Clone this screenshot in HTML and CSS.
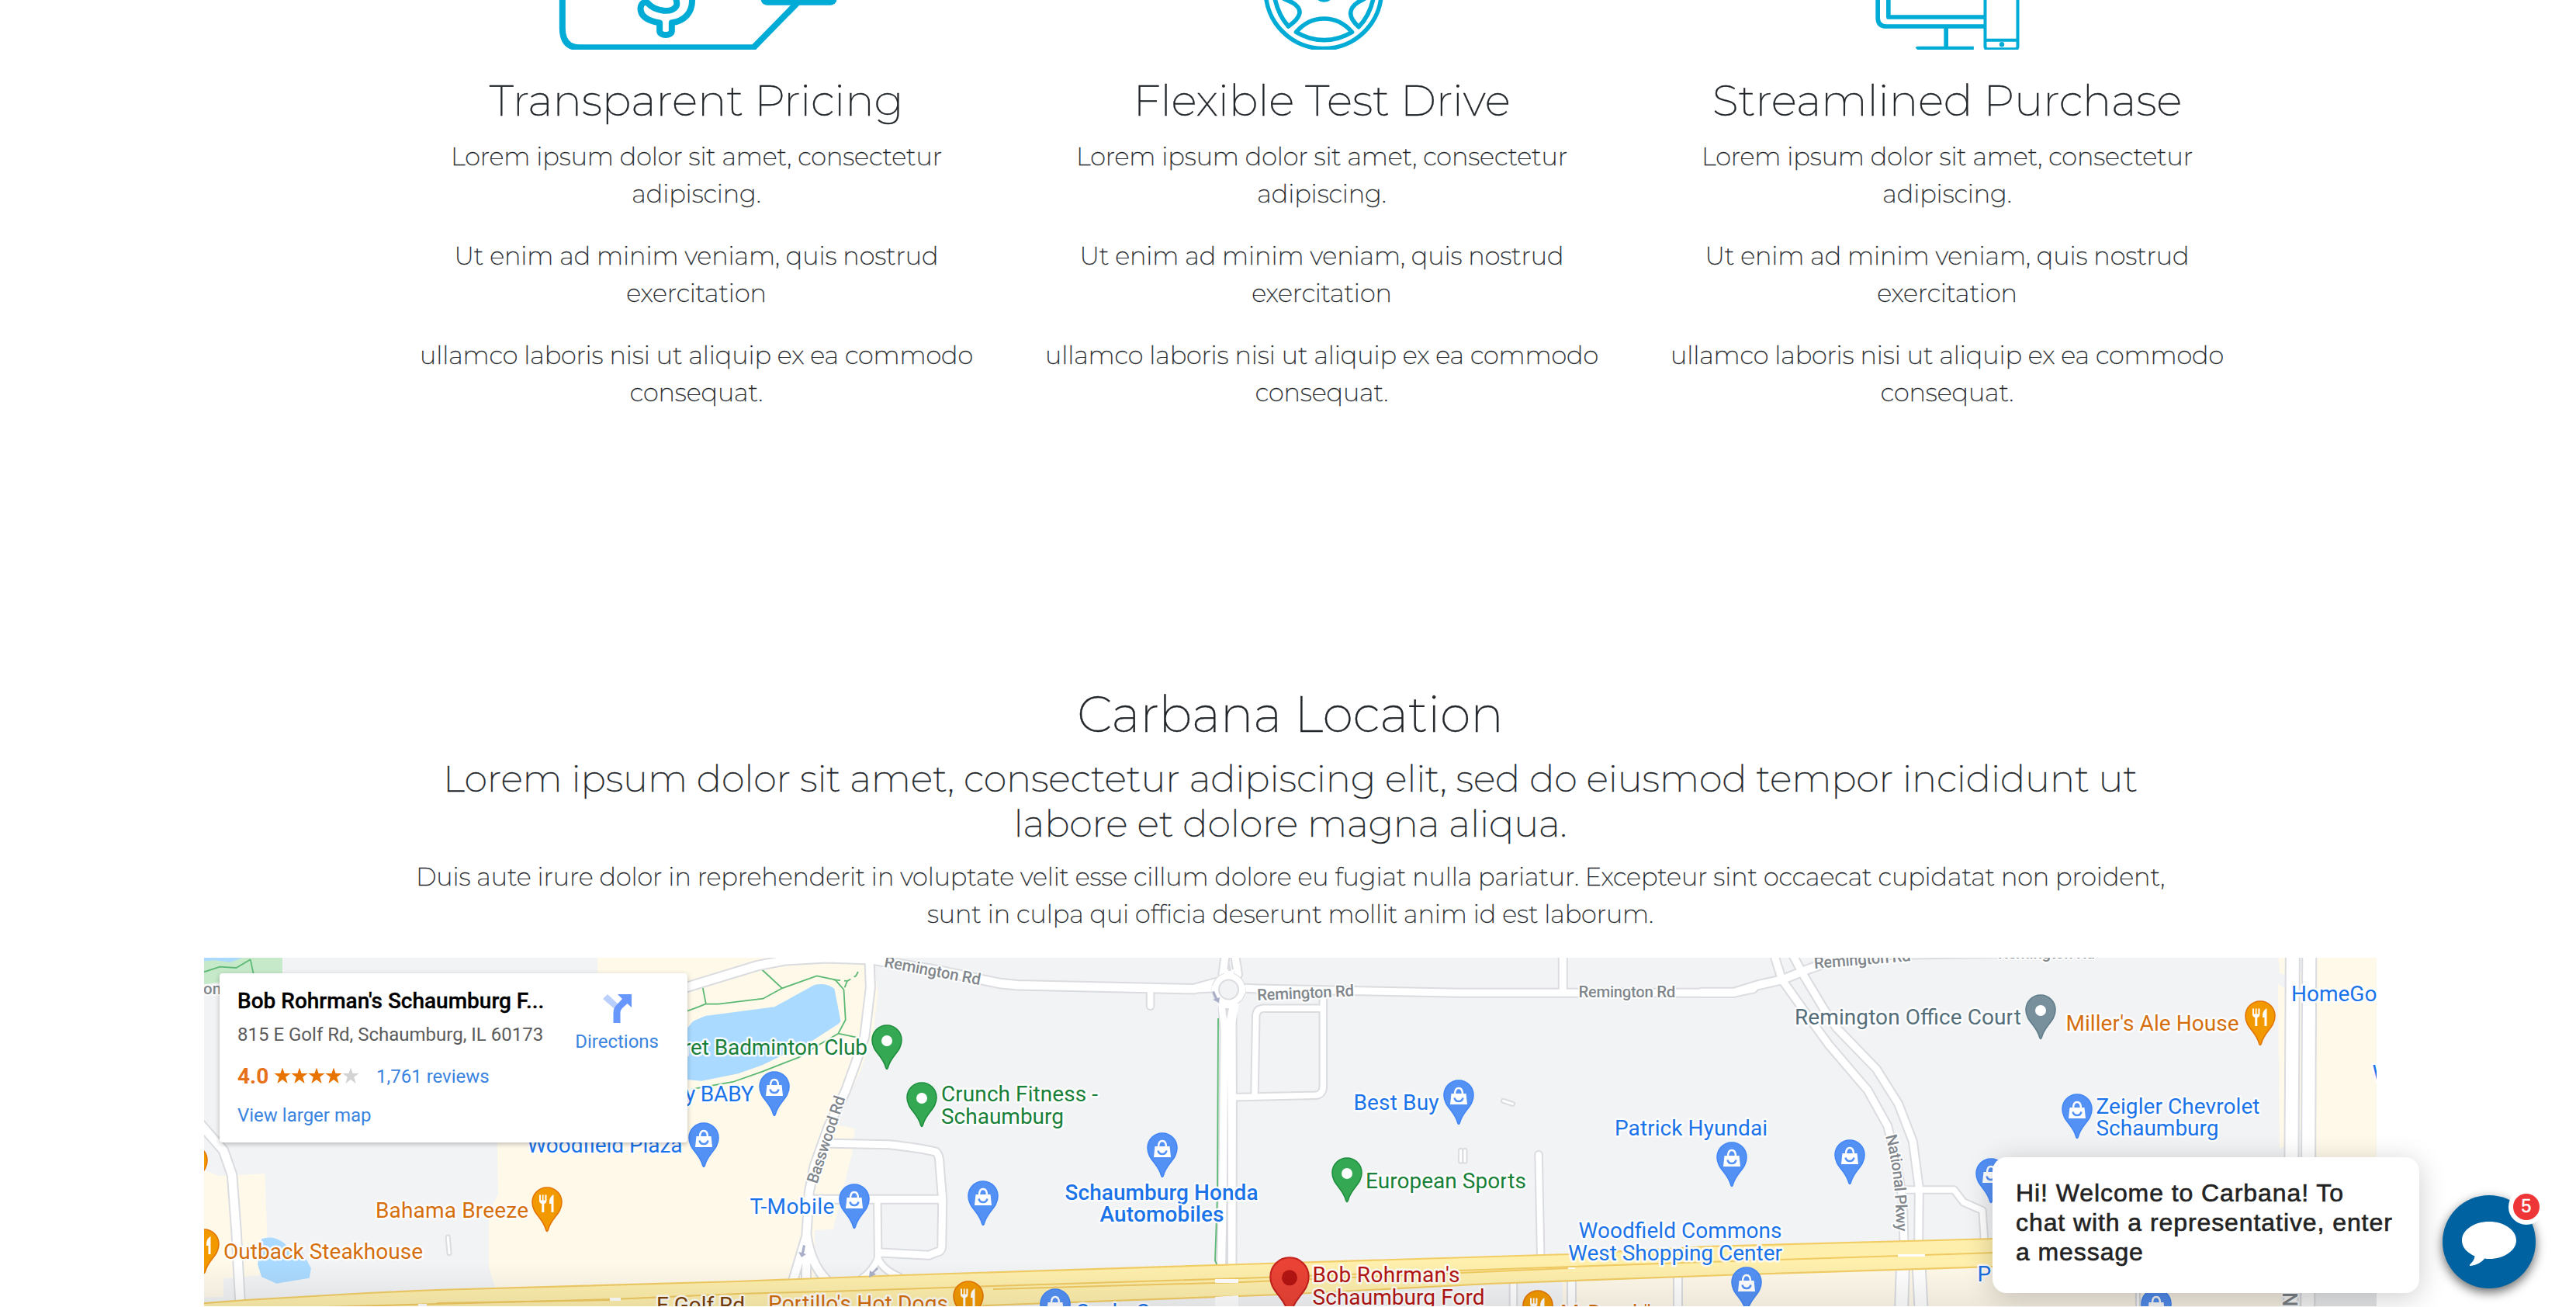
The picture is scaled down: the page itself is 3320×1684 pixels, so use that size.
FILE: index.html
```html
<!DOCTYPE html>
<html lang="en">
<head>
<meta charset="utf-8">
<title>Carbana</title>
<link rel="stylesheet" href="styles.css">
</head>
<body>
<main class="page">
  <section class="features">
    <article class="feature">
      <svg class="feature-icon" viewBox="494.5 0 806 64">
        <g class="line w8" transform="translate(700 0) scale(.3333)">
          <path d="M73-10V110Q74 184 140 184H812L988 4"/>
          <path d="M574-10C580 52 540 82 496 88V120A23 15 0 0 1 449 120V88C400 80 375 60 375 32C378 8 395 4 405 14C430 42 500 56 515 20Q517 8 510-10"/>
        </g>
        <rect class="solid" x="980" y="-20" width="98" height="26.7" rx="8"/>
      </svg>
      <h3>Transparent Pricing</h3>
      <p>Lorem ipsum dolor sit amet, consectetur<br>adipiscing.</p>
      <p>Ut enim ad minim veniam, quis nostrud<br>exercitation</p>
      <p>ullamco laboris nisi ut aliquip ex ea commodo<br>consequat.</p>
    </article>
    <article class="feature">
      <svg class="feature-icon" viewBox="1300.5 0 806 64">
        <g class="line w5" transform="translate(1610 0) scale(.3333)">
          <circle cx="286" cy="-36" r="224"/>
          <path d="M180 124Q225 72 288 72T396 124Q345 155 288 155T180 124ZM98-4Q112 60 150 102Q228 48 166 10L130-6M478-4Q464 60 422 104Q360 48 420 8L446-6"/>
          <circle cx="288" cy="-32" r="32"/>
        </g>
      </svg>
      <h3>Flexible Test Drive</h3>
      <p>Lorem ipsum dolor sit amet, consectetur<br>adipiscing.</p>
      <p>Ut enim ad minim veniam, quis nostrud<br>exercitation</p>
      <p>ullamco laboris nisi ut aliquip ex ea commodo<br>consequat.</p>
    </article>
    <article class="feature">
      <svg class="feature-icon" viewBox="2106.5 0 806 64">
        <g class="line w5" transform="translate(2400 0) scale(.3333)">
          <path d="M59-10V70Q60 102 92 102H470M100-10V66H470M323 108V186M210 190Q212 188 220 188H430"/>
          <path class="w4" d="M474-10V180Q474 190 484 190H590Q600 190 600 180V-10M474 155H600"/>
        </g>
        <circle class="solid" cx="2579.5" cy="57.3" r="3.2"/>
      </svg>
      <h3>Streamlined Purchase</h3>
      <p>Lorem ipsum dolor sit amet, consectetur<br>adipiscing.</p>
      <p>Ut enim ad minim veniam, quis nostrud<br>exercitation</p>
      <p>ullamco laboris nisi ut aliquip ex ea commodo<br>consequat.</p>
    </article>
  </section>

  <section class="location">
    <h1>Carbana Location</h1>
    <h2>Lorem ipsum dolor sit amet, consectetur adipiscing elit, sed do eiusmod tempor incididunt ut<br>labore et dolore magna aliqua.</h2>
    <p>Duis aute irure dolor in reprehenderit in voluptate velit esse cillum dolore eu fugiat nulla pariatur. Excepteur sint occaecat cupidatat non proident,<br>sunt in culpa qui officia deserunt mollit anim id est laborum.</p>
  </section>

  <section class="map">
    <svg class="map-canvas" viewBox="263 1235 2800 449">
      <defs>
        <g id="roads-west" transform="translate(250 1220) scale(.44643 .33333)">
          <path class="r11" d="M20 690L85 790L110 885L122 1100L134 1392"/>
          <path class="r4" d="M733 1125L737 1187"/>
          <path class="r6" d="M662 1385V1400M1222 1362V1392"/>
        </g>
        <g id="roads-mid" transform="translate(900 1220) scale(.44643 .33333)">
          <path class="r11" d="M-60 170L0 145L172 75L250 55L370 46L500 52L700 96L870 144L920 151L1430 166L1500 140"/>
          <path class="r8" d="M1305 170V232"/>
          <path class="r10" d="M494 55L497 160L480 350L455 450L425 560L375 700L335 850L320 950L312 1120L272 1300M313 1120L310 1400M313 1120Q325 1230 370 1290"/>
          <path class="r9" d="M360 762L550 767Q640 780 685 795Q697 805 697 850L705 980L703 1150Q704 1180 690 1182L665 1195L525 1185M330 979H705"/>
          <path class="r8" d="M517 985L519 1205Q505 1255 472 1285M519 1205Q530 1250 580 1278"/>
        </g>
        <g id="roads-centre" transform="translate(1550 1220) scale(.44643 .33333)">
          <path class="r9" d="M65 40L58 110L75 170M94 40L102 110L75 170M-30 165L75 160L160 165L260 168L480 174L740 181H1530L1590 165"/>
          <path class="r10" d="M75 200L60 240L64 330L60 800L54 1235M75 200L84 260L85 600L84 1235"/>
          <path class="r9" d="M1040 30V170"/>
          <path class="r8" d="M348 190V540Q348 575 325 577L90 584M348 241H175Q155 243 154 270L150 580"/>
          <path class="r8" d="M970 806L976 1200"/>
          <path class="r4" d="M868 598L895 610M745 790V832M757 790V832"/>
          <path class="r8" d="M897 1300V1400"/>
          <path class="r9" d="M1065 1285V1400M1372 1270V1400"/>
        </g>
        <g id="roads-east" transform="translate(2200 1220) scale(.33333)">
          <path class="r10" d="M-20 179H106L200 150L290 130L400 86L520 45L700 33L1130 26L1600 20"/>
          <path class="r9" d="M260 35L290 130L390 270L470 380L622 558L698 695L730 820L757 980L762 1150"/>
          <path class="r9" d="M332 35L372 110L450 240L500 315L655 475L740 610L796 755L820 935L818 1150"/>
          <path class="r8" d="M770 942H955L992 990L1065 1022L1073 1140"/>
          <path class="r14" d="M757 1245L752 1400M820 1245L828 1400"/>
        </g>
        <g id="roads-far" transform="translate(2540 1220) scale(.49743 .33333)">
          <path class="r15" d="M834 40L829 1400M877 40L873 1400"/>
          <path class="r4" d="M433 1330V1400"/>
        </g>
        <g id="all-roads">
          <use href="#roads-west"/><use href="#roads-mid"/><use href="#roads-centre"/><use href="#roads-east"/><use href="#roads-far"/>
        </g>
        <path id="pin" d="M20 1C9.500 1 1 9.300 1 20C1 35 15 40 18.800 56Q20 59 21.200 56C25 40 39 35 39 20C39 9.300 30.500 1 20 1Z"/>
        <g id="shop">
          <use href="#pin"/>
          <path class="ink" d="M10.500 18H29.500L31 32H9Z"/>
          <path class="ink-line" d="M15 19Q15 11 20 11T25 19"/>
          <path class="smile" d="M14.500 23.500Q15.500 28 20 28T25.500 23.500"/>
        </g>
        <g id="food">
          <use href="#pin"/>
          <path class="ink" d="M10 10.500H12V17.500H13.800V10.500H15.600V17.500H17.400V10.500H19.500V18Q19.500 21 16.300 22V33H13.300V22Q10 21 10 18ZM28.500 10Q22.500 13 23 22H25.500V33H28.500Z"/>
        </g>
        <g id="place"><use href="#pin"/><circle class="ink" cx="20" cy="21" r="7"/></g>
        <path id="pkwy" d="M2430 1465Q2444 1515 2444 1590"/>
      </defs>

      <rect class="land" x="263" y="1235" width="2800" height="449"/>

      <!-- commercial areas, parks and water -->
      <g transform="translate(250 1220) scale(.44643 .33333)">
        <path class="park" d="M29 45H255V110L75 140L29 148Z"/>
        <path class="water" d="M29 40H150L105 62L60 55L29 58Z"/>
        <path class="trail" d="M29 100L75 80L122 84L163 52M163 52L172 110"/>
        <path class="area" d="M29 868L50 875L70 888L205 880L215 1270L85 1285V1355L29 1358Z"/>
        <path class="water" d="M195 1132Q230 1115 262 1150L278 1182L312 1180L338 1245L333 1283L238 1304L195 1278L184 1230Z"/>
        <path class="area" d="M1165 45H1955L1975 180L1960 350L1925 480L1850 690L1908 705L1900 800L1845 1095L1792 1098V1300L872 1330L851 1240V1070L862 1000L878 960L875 740H1165Z"/>
      </g>
      <g transform="translate(900 1220) scale(.44643 .33333)">
        <path class="water" d="M-40 330L-15 290L20 270L220 235L335 150Q370 140 393 165L411 290L405 300L330 365L185 460L115 493L10 521L-40 515Z"/>
        <path class="trail" d="M-40 255L0 235L22 223L58 224L187 203L242 163L342 115L395 130L420 168L425 285L404 338L455 352M404 338L350 380L290 430L185 485L100 525L-20 553M12 155L22 223M183 90L242 163"/>
        <path class="trail dash" d="M390 130L430 135L455 115L463 95M430 135L420 168"/>
      </g>
      <g transform="translate(2540 1220) scale(.49743 .33333)">
        <path class="area" d="M893 45H1051V1340H893ZM797 45H816V112L800 105ZM796 145L815 165V770L800 785ZM853 100H857V710H852Z"/>
      </g>
      <path class="area" d="M2014 1650L2755 1625H2940V1684H2014Z"/>

      <use class="casing" href="#all-roads"/>
      <use class="surface" href="#all-roads"/>

      <!-- roundabout -->
      <circle class="ring-edge" cx="1583.500" cy="1276" r="22"/>
      <path class="surface-fill" d="M1562 1271H1605V1281H1562ZM1578 1250H1590V1262H1578Z"/>
      <circle class="ring" cx="1583.500" cy="1276" r="21"/>
      <circle class="island" cx="1583.500" cy="1276" r="12.500"/>
      <path class="surface-fill" d="M1570 1294H1597L1592 1320H1573Z"/>
      <path class="sliver" d="M1582 1380L1580 1630H1583ZM1579 1300H1584L1581 1315ZM1584 1240L1587 1252H1583Z"/>
      <path class="trail" d="M1570 1313L1569 1540L1566 1625L1569 1632"/>

      <!-- E Golf Rd -->
      <path class="highway" d="M240 1682L317 1676L473 1667L563 1663L950 1652L1163 1644L1600 1630L2022 1617L2200 1607L2570 1597L2760 1592V1628L2570 1633L2250 1643L1920 1655L1650 1669L1270 1683L1200 1700H240Z"/>
      <path class="highway-line" d="M380 1686L790 1675L950 1668L1070 1665L1280 1658L1600 1648L1880 1638L2200 1627L2570 1615"/>
      <path class="highway-line" d="M563 1680L790 1676M1280 1662L1600 1653L2022 1635"/>
      <path class="surface-fill" d="M1566 1649H1596V1654H1566ZM1566 1672L1596 1670V1684H1566ZM2021 1634H2030V1636H2021ZM2446 1617H2481V1620H2446ZM786 1673H800V1677H786ZM539 1681H550V1684H539Z"/>

      <!-- one-way arrows -->
      <g class="arrow">
        <path d="M1035 1605L1038 1606L1036 1616L1039 1617L1033 1621L1029 1614L1033 1615Z"/>
        <path d="M1562 1279L1565 1278L1569 1287L1572 1286L1571 1293L1563 1289L1566 1288Z"/>
        <path d="M1130 1634L1132 1636L1126 1641L1129 1643L1120 1647L1121 1638L1124 1640Z"/>
      </g>

      <g class="road-label">
        <text x="262" y="1282">on</text>
        <text transform="translate(1138.800 1246.700) rotate(10.700)" textLength="126">Remington Rd</text>
        <text transform="translate(1620.500 1290) rotate(-2.600)" textLength="125">Remington Rd</text>
        <text x="2034.400" y="1286" textLength="125">Remington Rd</text>
        <text transform="translate(2338.500 1249) rotate(-4.600)" textLength="125">Remington Rd</text>
        <text x="2575" y="1236" textLength="125">Remington Rd</text>
        <text transform="translate(1053 1527) rotate(-71.800)" textLength="117">Basswood Rd</text>
        <text><textPath href="#pkwy" textLength="124">National Pkwy</textPath></text>
        <text class="big" transform="translate(2942 1666) rotate(90)">Ne</text>
      </g>

      <g class="poi blue">
        <use href="#shop" x="887" y="1447"/><use href="#shop" x="978" y="1381"/><use href="#shop" x="1081" y="1526"/>
        <use href="#shop" x="1247" y="1522"/><use href="#shop" x="1478" y="1460"/><use href="#shop" x="1340" y="1661"/>
        <use href="#shop" x="1860" y="1392"/><use href="#shop" x="2212" y="1472"/><use href="#shop" x="2231" y="1633"/>
        <use href="#shop" x="2364" y="1469"/><use href="#shop" x="2546" y="1493"/><use href="#shop" x="2657" y="1410"/>
        <use href="#shop" x="2759" y="1661"/>
      </g>
      <g class="poi green">
        <use href="#place" x="1123" y="1321"/><use href="#place" x="1168" y="1395"/><use href="#place" x="1716" y="1492"/>
      </g>
      <g class="poi gray"><use href="#place" x="2610" y="1282"/></g>
      <g class="poi orange">
        <use href="#food" x="685" y="1530"/><use href="#food" x="243" y="1584"/><use href="#food" x="228" y="1476"/>
        <use href="#food" x="1228" y="1651"/><use href="#food" x="1962" y="1663"/><use href="#food" x="2893" y="1290"/>
      </g>
      <g class="poi red" transform="translate(1636 1620) scale(1.3)"><use href="#pin"/><circle class="core" cx="20" cy="21" r="7.700"/></g>

      <g class="label blue">
        <text x="679.500" y="1486" textLength="200">Woodfield Plaza</text>
        <text x="883" y="1420" textLength="88.500">y BABY</text>
        <text x="966.400" y="1565" textLength="109">T-Mobile</text>
        <text class="strong" x="1372.500" y="1547" textLength="249">Schaumburg Honda</text>
        <text class="strong" x="1417.500" y="1575" textLength="160">Automobiles</text>
        <text x="1744.500" y="1431" textLength="110">Best Buy</text>
        <text x="2081" y="1463.500" textLength="197">Patrick Hyundai</text>
        <text x="2034.500" y="1596" textLength="262">Woodfield Commons</text>
        <text x="2021" y="1624.500" textLength="276">West Shopping Center</text>
        <text x="2701.500" y="1435.500" textLength="211">Zeigler Chevrolet</text>
        <text x="2701.500" y="1463.500" textLength="158">Schaumburg</text>
        <text x="2953" y="1291">HomeGo</text>
        <text x="3057.500" y="1392.700">W</text>
        <text x="2548.500" y="1652">P</text>
        <text x="1386" y="1701" textLength="138">Cycle Gear</text>
      </g>
      <g class="label green">
        <text x="881" y="1360" textLength="237">ret Badminton Club</text>
        <text x="1213" y="1420" textLength="202">Crunch Fitness -</text>
        <text x="1213" y="1448.500" textLength="158">Schaumburg</text>
        <text x="1760" y="1531.500" textLength="207">European Sports</text>
      </g>
      <g class="label orange">
        <text x="484" y="1569.500" textLength="197">Bahama Breeze</text>
        <text x="288" y="1623" textLength="257">Outback Steakhouse</text>
        <text x="990" y="1690" textLength="232">Portillo's Hot Dogs</text>
        <text x="2662.500" y="1329" textLength="223">Miller's Ale House</text>
        <text x="2011" y="1702" textLength="128">McDonald's</text>
      </g>
      <g class="label red">
        <text x="1691.500" y="1653" textLength="190">Bob Rohrman's</text>
        <text x="1691.500" y="1681.500" textLength="222">Schaumburg Ford</text>
      </g>
      <g class="label slate"><text x="2313" y="1321" textLength="292">Remington Office Court</text></g>
      <g class="label brown"><text x="846" y="1692" textLength="114">E Golf Rd</text></g>
    </svg>
    <div class="map-fade"></div>

    <div class="place-card">
      <div class="place-info">
        <div class="place-name">Bob Rohrman's Schaumburg F...</div>
        <div class="place-address">815 E Golf Rd, Schaumburg, IL 60173</div>
        <div class="rating">
          <span class="score">4.0</span>
          <svg class="stars" viewBox="0 0 110 22">
            <defs><path id="star" d="M11 .5L13.600 8H21.600L15.200 12.700L17.600 21L11 16L4.400 21L6.800 12.700L.4 8H8.400Z"/></defs>
            <use href="#star"/><use href="#star" x="22"/><use href="#star" x="44"/><use href="#star" x="66"/><use class="off" href="#star" x="88"/>
          </svg>
          <a class="link">1,761 reviews</a>
        </div>
        <a class="link">View larger map</a>
      </div>
      <div class="directions">
        <svg class="directions-icon" viewBox="0 0 37 37">
          <path class="light" d="M0 6L6 0L20 13L15 19Z"/>
          <path class="main" d="M19 0H37V17L31.500 12L25 18Q22.500 20.500 22.500 24V37H13.500V24Q13.500 17.500 18.500 13L25 6Z"/>
        </svg>
        <a class="link">Directions</a>
      </div>
    </div>
  </section>
</main>

<aside class="chat">
  <div class="chat-message">Hi! Welcome to Carbana! To<br>chat with a representative, enter<br>a message</div>
  <div class="chat-button">
    <svg class="chat-icon" viewBox="0 0 70 58"><path d="M35 0C54 0 70 10.500 70 24S54 48 35 48Q32 48 29.500 47.500Q22 56 11 57Q9 57 10.500 55Q16 50 16.500 44.500Q0 37 0 24C0 10.500 16 0 35 0Z"/></svg>
    <span class="chat-badge">5</span>
  </div>
</aside>
</body>
</html>
```
FILE: styles.css
```css
* { box-sizing: border-box; }

body {
  margin: 0;
  height: 1684px;
  overflow: hidden;
  background: #fff;
  color: #212529;
  font-family: Montserrat, Inter, sans-serif;
  font-weight: 200;
  font-size: 32px;
  line-height: 48px;
}

h1, h2, h3, p {
  margin: 0;
  font-weight: 200;
  text-align: center;
  letter-spacing: -.0038em;
  -webkit-text-stroke: .35px #212529;
}

.page { display: flex; flex-direction: column; height: 1684px; overflow: hidden; }

/* Feature columns */
.features {
  display: grid;
  grid-template-columns: repeat(3, 806px);
  margin-left: 494.5px;
  height: 882px;
  flex: none;
}
.feature { display: flex; flex-direction: column; }
.feature-icon { display: block; width: 806px; height: 64px; overflow: hidden; }
.feature h3 { margin: 32px 0 15px; font-size: 56px; line-height: 67px; white-space: nowrap; }
.feature p { margin-bottom: 32px; }

.line { fill: none; stroke: #00abd6; stroke-linecap: butt; stroke-linejoin: round; }
.w8 { stroke-width: 24px; }
.w5 { stroke-width: 17px; }
.w4 { stroke-width: 12px; }
.solid { fill: #00abd6; }

/* Location copy */
.location { width: 2800px; margin-left: 263px; margin-bottom: 32px; flex: none; }
.location h1 { font-size: 64px; line-height: 77px; margin-bottom: 16px; }
.location h2 { font-size: 48px; line-height: 57.6px; margin-bottom: 16px; }

/* Map */
.map {
  position: relative;
  flex: none;
  width: 2800px;
  height: 449px;
  margin-left: 263px;
  overflow: hidden;
  font-family: Roboto, sans-serif;
  font-weight: 400;
}
.map-canvas { display: block; width: 2800px; height: 449px; }
.map-fade {
  position: absolute;
  inset: auto 0 0 0;
  height: 56px;
  background: linear-gradient(rgba(0, 0, 0, 0), rgba(0, 0, 0, .07));
}

.land { fill: #f1f3f5; }
.area { fill: #fff9ea; }
.park { fill: #c6e9c9; }
.water { fill: #aadaff; }
.trail { fill: none; stroke: #5bb974; stroke-width: 1.8px; vector-effect: non-scaling-stroke; }
.dash { stroke-dasharray: 9 5; }

.casing, .surface { fill: none; stroke-linejoin: round; stroke-linecap: round; }
.casing { --case: 4px; stroke: #dadce0; }
.surface { --case: 0px; stroke: #fff; }
[id^="roads-"] path { vector-effect: non-scaling-stroke; }
.r4 { stroke-width: calc(3px + var(--case)); }
.r6 { stroke-width: calc(6px + var(--case)); }
.r8 { stroke-width: calc(7.5px + var(--case)); }
.r9 { stroke-width: calc(9px + var(--case)); }
.r10 { stroke-width: calc(10px + var(--case)); }
.r11 { stroke-width: calc(10.5px + var(--case)); }
.r14 { stroke-width: calc(15px + var(--case)); }
.r15 { stroke-width: calc(16px + var(--case)); }
.surface-fill { fill: #fff; }
.sliver { fill: #dadce0; }
.ring-edge { fill: #dadce0; }
.ring { fill: #fff; }
.island { fill: #f1f3f5; stroke: #dadce0; stroke-width: 2px; }
.highway { fill: #feefad; stroke: #f2cd66; stroke-width: 2.2px; }
.highway-line { fill: none; stroke: #f0ca62; stroke-width: 2px; }
.arrow { fill: #a9afc8; }

.label text, .road-label text { paint-order: stroke; stroke: #fff; stroke-linejoin: round; stroke-width: 5px; stroke-opacity: .9; }
.label { font-size: 28px; }
.label .strong { font-weight: 500; }
.road-label { font-size: 20.5px; fill: #80868b; }
.road-label text { font-weight: 500; stroke-width: 4px; }
.road-label .big { font-size: 26px; }
.label.blue { fill: #1a73e8; }
.label.green { fill: #188038; }
.label.orange { fill: #d56e0c; }
.label.red { fill: #b31412; }
.label.slate { fill: #546e7a; }
.label.brown { fill: #7a3e06; }

.poi { stroke-width: 1.6px; }
.poi.blue { fill: #5491f5; stroke: #4285f4; }
.poi.green { fill: #34a853; stroke: #1e8e3e; }
.poi.orange { fill: #f29900; stroke: #e37400; }
.poi.gray { fill: #78909c; stroke: #607d8b; }
.poi.red { fill: #ea4335; stroke: #c5221f; }
.core { fill: #b31412; stroke: none; }
.ink { fill: #fff; stroke: none; }
.ink-line { fill: none; stroke: #fff; stroke-width: 2.4px; }
.smile { fill: none; stroke: #5491f5; stroke-width: 2.6px; }

/* Place card */
.place-card {
  position: absolute;
  left: 20px;
  top: 20px;
  width: 603px;
  height: 218px;
  padding: 18px 25px 0 23px;
  display: flex;
  justify-content: space-between;
  background: #fff;
  border-radius: 4px;
  box-shadow: 0 2px 6px rgba(0, 0, 0, .25);
  font-size: 24px;
  line-height: 32px;
  color: #5b5b5b;
  white-space: nowrap;
}
.place-name { font-size: 28px; line-height: 36px; font-weight: 500; color: #000; -webkit-text-stroke: .3px #000; }
.place-address { margin-top: 9px; }
.rating { display: flex; align-items: center; margin: 22px 0 18px; }
.score { font-size: 28px; font-weight: 700; color: #e7711b; width: 47px; }
.stars { width: 110px; height: 22px; margin-right: 22px; position: relative; top: -1px; fill: #e77400; }
.stars .off { fill: #d3d3d3; }
.link { color: #3a84df; }
.directions { display: flex; flex-direction: column; align-items: center; padding: 9px 12px 0 0; }
.directions-icon { width: 37px; height: 37px; margin-bottom: 8px; }
.light { fill: #bbcffd; }
.main { fill: #6797fd; }

/* Chat widget */
.chat {
  position: absolute;
  right: 52px;
  bottom: 18px;
  display: flex;
  align-items: flex-end;
  gap: 30px;
  font-family: "Liberation Sans", sans-serif;
  font-weight: 400;
}
.chat-message {
  width: 550px;
  height: 175px;
  padding: 27px 30px;
  border-radius: 18px;
  background: #fff;
  color: #222;
  line-height: 38px;
  letter-spacing: .92px;
  -webkit-text-stroke: .6px #222;
  white-space: nowrap;
  box-shadow: 0 6px 36px rgba(0, 0, 0, .2);
}
.chat-button {
  position: relative;
  width: 120px;
  height: 120px;
  margin-bottom: 6px;
  border-radius: 50%;
  background: #0062a1;
  box-shadow: 0 5px 14px rgba(0, 0, 0, .6);
}
.chat-icon { position: absolute; left: 25px; top: 34px; width: 70px; height: 58px; fill: #fff; }
.chat-badge {
  position: absolute;
  right: -11px;
  top: -8px;
  width: 46px;
  height: 46px;
  border: 6px solid #fff;
  border-radius: 50%;
  background: #ee3537;
  color: #fff;
  font-size: 23px;
  line-height: 33px;
  text-align: center;
  -webkit-text-stroke: .5px #fff;
}
```
